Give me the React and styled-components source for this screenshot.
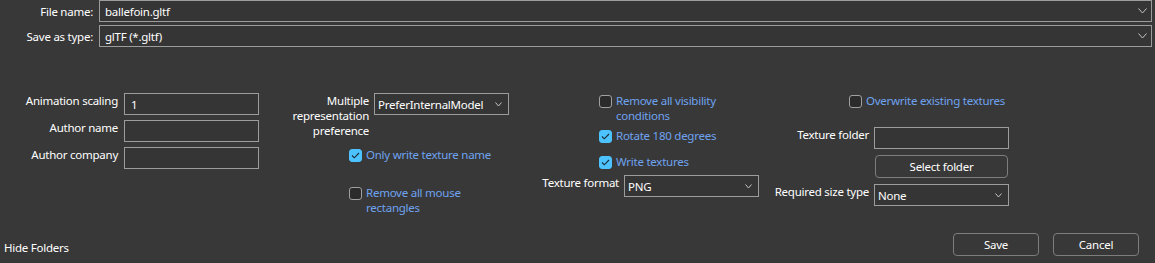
import React from 'react';
import styled, { createGlobalStyle } from 'styled-components';

const Global = createGlobalStyle`
  html, body { margin: 0; padding: 0; background: #383838; }
  body {
    font-family: "Noto Sans", "Segoe UI", sans-serif;
    font-size: 11.5px;
    letter-spacing: -0.25px;
    color: #ffffff;
  }
  * { box-sizing: border-box; }
`;

const Page = styled.div`
  width: 1155px;
  height: 263px;
  background: #383838;
  display: flex;
  flex-direction: column;
  overflow: hidden;
`;

const Header = styled.div`
  display: flex;
  flex-direction: column;
  gap: 3px;
  padding-right: 3px;
`;

const HeaderRow = styled.div`
  display: flex;
  align-items: center;
  gap: 6px;
`;

const HeaderLabel = styled.span`
  width: 93px;
  flex: none;
  text-align: right;
  line-height: 15px;
`;

const Combo = styled.div`
  flex: ${p => (p.$width ? 'none' : '1')};
  width: ${p => (p.$width ? `${p.$width}px` : 'auto')};
  height: 22px;
  border: 1px solid #9c9c9c;
  background: #353535;
  display: flex;
  align-items: center;
  justify-content: space-between;
  padding: 0 ${p => p.$padRight || 5}px 0 ${p => p.$padLeft || 5}px;
  line-height: 15px;
  white-space: nowrap;
`;

const Options = styled.div`
  display: flex;
  align-items: flex-start;
  margin-top: 46px;
`;

const Column = styled.div`
  display: flex;
  flex-direction: column;
  align-items: flex-start;
  margin-left: ${p => p.$offset || 0}px;
  gap: ${p => p.$gap || 0}px;
`;

const LabeledRow = styled.div`
  display: flex;
  align-items: flex-start;
  gap: ${p => p.$gap || 5}px;
  margin-top: ${p => p.$top || 0}px;
`;

const FieldLabel = styled.span`
  width: ${p => p.$width}px;
  flex: none;
  text-align: right;
  line-height: 15px;
  white-space: nowrap;
`;

const TextBox = styled.div`
  width: 135px;
  height: 22px;
  border: 1px solid #9c9c9c;
  background: #353535;
  padding-left: 6px;
  display: flex;
  align-items: center;
  line-height: 15px;
`;

const CheckRow = styled.label`
  display: flex;
  align-items: flex-start;
  gap: 4px;
  margin-left: ${p => p.$indent || 0}px;
  margin-top: ${p => p.$top || 0}px;
  color: #6fa3f0;
  line-height: 15px;
  white-space: nowrap;
`;

const Box = styled.span`
  flex: none;
  width: 13px;
  height: 13px;
  margin-top: 2px;
  border-radius: 3px;
  display: flex;
  align-items: center;
  justify-content: center;
  background: ${p => (p.$checked ? '#4cc2ff' : '#2b2b2b')};
  border: 1px solid ${p => (p.$checked ? '#4cc2ff' : '#a0a0a0')};
`;

const Button = styled.button`
  width: ${p => p.$width || 86}px;
  height: 23px;
  margin-left: ${p => p.$indent || 0}px;
  margin-top: ${p => p.$top || 0}px;
  border: 1px solid #7d7d7d;
  border-radius: 4px;
  background: #383838;
  color: #ffffff;
  font: inherit;
  letter-spacing: inherit;
  line-height: 15px;
  padding: 0;
`;

const Footer = styled.div`
  margin-top: auto;
  display: flex;
  align-items: center;
  justify-content: space-between;
  padding: 0 16px 7px 4px;
`;

const FooterLink = styled.span`
  line-height: 15px;
  padding-top: 5px;
`;

const ButtonGroup = styled.div`
  display: flex;
  gap: 14px;
`;

const Chevron = ({ w = 9, h = 5 }) => (
  <svg width={w} height={h + 1} viewBox={`0 0 ${w} ${h + 1}`}>
    <polyline
      points={`0.5,0.5 ${w / 2},${h} ${w - 0.5},0.5`}
      fill="none"
      stroke="#c4c4c4"
      strokeWidth="1"
    />
  </svg>
);

const Check = ({ checked, indent, top, children }) => (
  <CheckRow $indent={indent} $top={top}>
    <Box $checked={checked}>
      {checked && (
        <svg width="9" height="7" viewBox="0 0 9 7">
          <polyline points="1,3.5 3.3,5.8 8,1" fill="none" stroke="#1c2a33" strokeWidth="1.1" />
        </svg>
      )}
    </Box>
    <span>{children}</span>
  </CheckRow>
);

const Select = ({ value }) => (
  <Combo $width={135} $padLeft={3} $padRight={6}>
    <span>{value}</span>
    <Chevron w={7} h={4} />
  </Combo>
);

export default function App() {
  return (
    <>
      <Global />
      <Page>
        <Header>
          <HeaderRow>
            <HeaderLabel>File name:</HeaderLabel>
            <Combo $padLeft={5} $padRight={4}>
              <span>ballefoin.gltf</span>
              <Chevron />
            </Combo>
          </HeaderRow>
          <HeaderRow>
            <HeaderLabel>Save as type:</HeaderLabel>
            <Combo $padLeft={5} $padRight={4}>
              <span>glTF (*.gltf)</span>
              <Chevron />
            </Combo>
          </HeaderRow>
        </Header>

        <Options>
          <Column $gap={5}>
            <LabeledRow $gap={6}>
              <FieldLabel $width={118}>Animation scaling</FieldLabel>
              <TextBox>1</TextBox>
            </LabeledRow>
            <LabeledRow $gap={6}>
              <FieldLabel $width={118}>Author name</FieldLabel>
              <TextBox />
            </LabeledRow>
            <LabeledRow $gap={6}>
              <FieldLabel $width={118}>Author company</FieldLabel>
              <TextBox />
            </LabeledRow>
          </Column>

          <Column $offset={30}>
            <LabeledRow>
              <FieldLabel $width={80}>
                Multiple
                <br />
                representation
                <br />
                preference
              </FieldLabel>
              <Select value="PreferInternalModel" />
            </LabeledRow>
            <Check checked indent={60} top={9}>Only write texture name</Check>
            <Check indent={60} top={23}>
              Remove all mouse
              <br />
              rectangles
            </Check>
          </Column>

          <Column $offset={33}>
            <Check indent={57}>
              Remove all visibility
              <br />
              conditions
            </Check>
            <Check checked indent={57} top={5}>Rotate 180 degrees</Check>
            <Check checked indent={57} top={11}>Write textures</Check>
            <LabeledRow $top={6}>
              <FieldLabel $width={77}>Texture format</FieldLabel>
              <Select value="PNG" />
            </LabeledRow>
          </Column>

          <Column $offset={15}>
            <Check indent={75}>Overwrite existing textures</Check>
            <LabeledRow $top={19}>
              <FieldLabel $width={95}>Texture folder</FieldLabel>
              <TextBox />
            </LabeledRow>
            <Button $width={133} $indent={101} $top={6}>Select folder</Button>
            <LabeledRow $top={6}>
              <FieldLabel $width={95}>Required size type</FieldLabel>
              <Select value="None" />
            </LabeledRow>
          </Column>
        </Options>

        <Footer>
          <FooterLink>Hide Folders</FooterLink>
          <ButtonGroup>
            <Button>Save</Button>
            <Button>Cancel</Button>
          </ButtonGroup>
        </Footer>
      </Page>
    </>
  );
}
